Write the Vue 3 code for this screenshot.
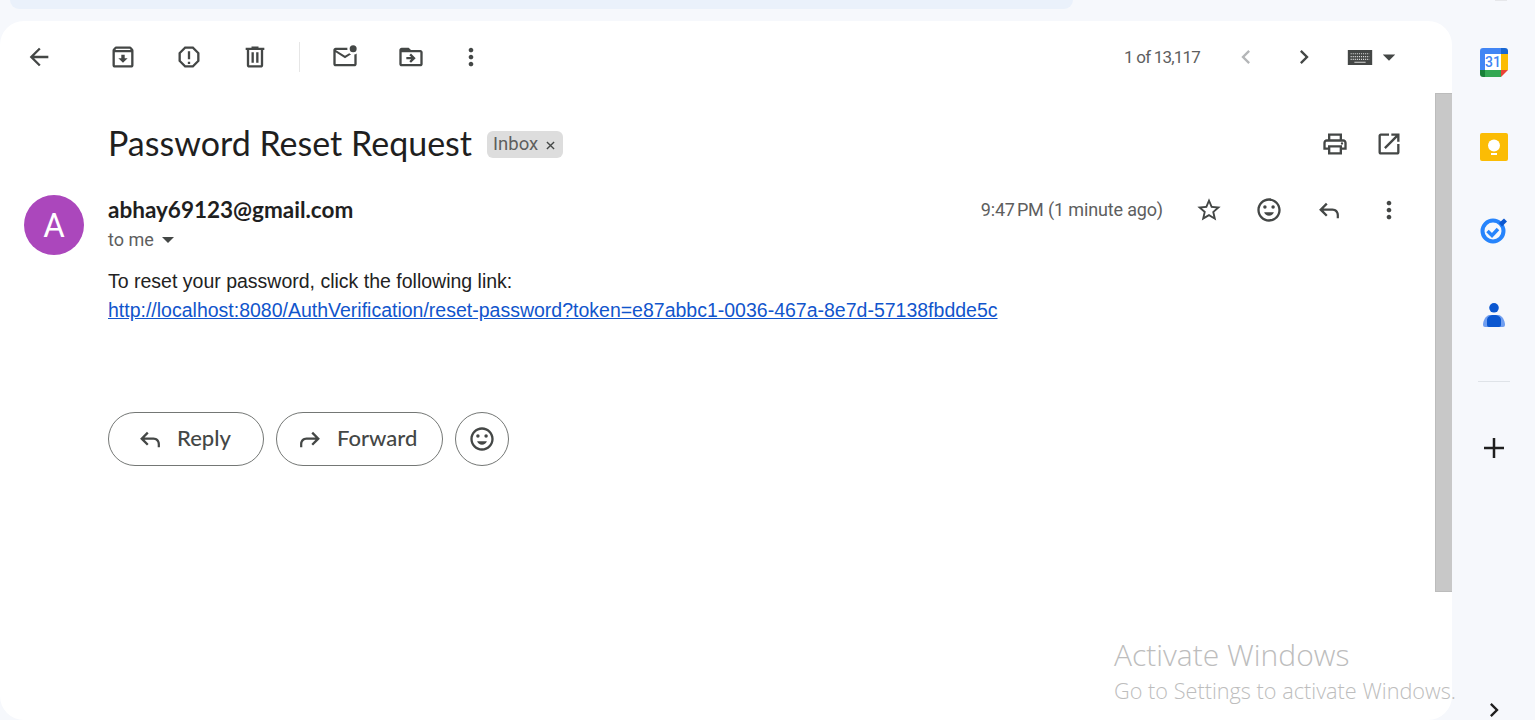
<script setup>
const icons = {
  back: 'M20 11H7.83l5.59-5.59L12 4l-8 8 8 8 1.41-1.41L7.83 13H20v-2z',
  archive: 'M20.54 5.23l-1.39-1.68C18.88 3.21 18.47 3 18 3H6c-.47 0-.88.21-1.16.55L3.46 5.23C3.17 5.57 3 6.02 3 6.5V19c0 1.1.9 2 2 2h14c1.1 0 2-.9 2-2V6.5c0-.48-.17-.93-.46-1.27zM6.24 5h11.52l.83 1H5.42l.82-1zM5 19V8h14v11H5zm8.45-9h-2.9v3H8l4 4 4-4h-2.55z',
  report: 'M15.73 3H8.27L3 8.27v7.46L8.27 21h7.46L21 15.73V8.27L15.73 3zM19 14.9L14.9 19H9.1L5 14.9V9.1L9.1 5h5.8L19 9.1v5.8zM11 7h2v7h-2zM11 16h2v2h-2z',
  trash: 'M15 4V3H9v1H4v2h1v13c0 1.1.9 2 2 2h10c1.1 0 2-.9 2-2V6h1V4h-5zm2 15H7V6h10v13zM9 8h2v9H9zm4 0h2v9h-2z',
  unread: 'M22 8.98V18c0 1.1-.9 2-2 2H4c-1.1 0-2-.9-2-2V6c0-1.1.9-2 2-2h10.1c-.06.32-.1.66-.1 1s.04.68.1 1H4l8 5 3.67-2.29c.47.43 1.02.76 1.63.98L12 13 4 8v10h16V9.9c.74-.15 1.42-.48 2-.92zM16 5a3 3 0 1 0 6 0 3 3 0 1 0-6 0z',
  folder: 'M20 6h-8l-2-2H4c-1.1 0-2 .9-2 2v12c0 1.1.9 2 2 2h16c1.1 0 2-.9 2-2V8c0-1.1-.9-2-2-2zm0 12H4V8h16v10zM12.16 12H8v2h4.16l-1.59 1.59L11.99 17 16 13l-4.01-4-1.42 1.41z',
  more: 'M12 8c1.1 0 2-.9 2-2s-.9-2-2-2-2 .9-2 2 .9 2 2 2zm0 2c-1.1 0-2 .9-2 2s.9 2 2 2 2-.9 2-2-.9-2-2-2zm0 6c-1.1 0-2 .9-2 2s.9 2 2 2 2-.9 2-2-.9-2-2-2z',
  prev: 'M15.41 7.41L14 6l-6 6 6 6 1.41-1.41L10.83 12z',
  next: 'M8.59 16.59L10 18l6-6-6-6-1.41 1.41L13.17 12z',
  drop: 'M7 10l5 5 5-5z',
  print: 'M19 8h-1V3H6v5H5c-1.66 0-3 1.34-3 3v6h4v4h12v-4h4v-6c0-1.66-1.34-3-3-3zM8 5h8v3H8V5zm8 12v2H8v-4h8v2zm2-2v-2H6v2H4v-4c0-.55.45-1 1-1h14c.55 0 1 .45 1 1v4h-2zM17 11.5a1 1 0 1 0 2 0 1 1 0 1 0-2 0z',
  open: 'M19 19H5V5h7V3H5c-1.11 0-2 .9-2 2v14c0 1.1.89 2 2 2h14c1.1 0 2-.9 2-2v-7h-2v7zM14 3v2h3.59l-9.83 9.83 1.41 1.41L19 6.41V10h2V3h-7z',
  star: 'M22 9.24l-7.19-.62L12 2 9.19 8.63 2 9.24l5.46 4.73L5.82 21 12 17.27 18.18 21l-1.63-7.03L22 9.24zM12 15.4l-3.76 2.27 1-4.28-3.32-2.88 4.38-.38L12 6.1l1.71 4.04 4.38.38-3.32 2.88 1 4.28L12 15.4z',
  smile: 'M12 2C6.48 2 2 6.48 2 12s4.48 10 10 10 10-4.48 10-10S17.52 2 12 2zm0 18c-4.41 0-8-3.59-8-8s3.59-8 8-8 8 3.59 8 8-3.59 8-8 8zM7 9.5a1.5 1.5 0 1 0 3 0 1.5 1.5 0 1 0-3 0zM14 9.5a1.5 1.5 0 1 0 3 0 1.5 1.5 0 1 0-3 0zM12 17c1.9 0 3.5-1.2 4.2-3H7.8c.7 1.8 2.3 3 4.2 3z',
  reply: 'M9.4 5.800L10.800 7.200 7.300 10.800H15c3.100 0 5.500 2.400 5.500 5.500V19h-1.900v-2.700c0-2-1.600-3.600-3.600-3.600H7.300l3.500 3.500-1.400 1.400L3.500 11.800z',
  forward: 'M14.600 5.800L13.200 7.200l3.500 3.600H9c-3.100 0-5.500 2.400-5.500 5.500V19h1.900v-2.700c0-2 1.600-3.600 3.600-3.600h7.700l-3.500 3.500 1.400 1.400 5.900-5.800z',
  plus: 'M20 13h-7v7h-2v-7H4v-2h7V4h2v7h7v2z',
}

const mainActions = [icons.archive, icons.report, icons.trash]
const moveActions = [icons.unread, icons.folder]
const messageActions = [icons.star, icons.smile, icons.reply, icons.more]
</script>

<template>
  <div class="page">
    <div class="top-strip">
      <div class="search-bar"></div>
      <div class="account-edge"></div>
    </div>

    <div class="main">
      <section class="panel">
        <div class="toolbar">
          <button class="tool back"><svg class="icon" viewBox="0 0 24 24"><path :d="icons.back" /></svg></button>
          <button v-for="d in mainActions" :key="d" class="tool"><svg class="icon" viewBox="0 0 24 24"><path :d="d" /></svg></button>
          <div class="divider"></div>
          <button v-for="d in moveActions" :key="d" class="tool"><svg class="icon" viewBox="0 0 24 24"><path :d="d" /></svg></button>
          <button class="tool narrow"><svg class="icon" viewBox="0 0 24 24"><path :d="icons.more" /></svg></button>

          <div class="pager">
            <span class="count">1 of 13,117</span>
            <svg class="icon chev off" viewBox="0 0 24 24"><path :d="icons.prev" /></svg>
            <svg class="icon chev on" viewBox="0 0 24 24"><path :d="icons.next" /></svg>
            <svg class="keyboard" viewBox="0 0 26 16">
              <rect width="26" height="16" fill="#444746" />
              <path d="M3 4h20M3 7h20M3 10h20" stroke="#d8d8d8" stroke-width="1.2" stroke-dasharray="1.2 1" />
              <path d="M7 13h12" stroke="#d8d8d8" stroke-width="1.2" />
            </svg>
            <svg class="icon drop" viewBox="0 0 24 24"><path :d="icons.drop" /></svg>
          </div>
        </div>

        <div class="body-row">
          <div class="mail">
            <div class="subject-row">
              <h1 class="subject">Password Reset Request</h1>
              <span class="chip">Inbox
                <svg class="chip-x" viewBox="0 0 10 10"><path d="M1 1l8 8M9 1l-8 8" /></svg>
              </span>
              <div class="subject-actions">
                <button class="tool small"><svg class="icon" viewBox="0 0 24 24"><path :d="icons.print" /></svg></button>
                <button class="tool small"><svg class="icon" viewBox="0 0 24 24"><path :d="icons.open" /></svg></button>
              </div>
            </div>

            <div class="sender-row">
              <div class="avatar">A</div>
              <div class="sender">
                <div class="sender-name">abhay69123@gmail.com</div>
                <div class="to-me">to me <svg class="to-drop" viewBox="0 0 10 5"><path d="M0 0l5 5 5-5z" /></svg></div>
              </div>
              <span class="date">9:47&#8239;PM (1 minute ago)</span>
              <div class="message-actions">
                <button v-for="d in messageActions" :key="d" class="tool act"><svg class="icon" viewBox="0 0 24 24"><path :d="d" /></svg></button>
              </div>
            </div>

            <div class="message">
              <div>To reset your password, click the following link:</div>
              <a href="#">http://localhost:8080/AuthVerification/reset-password?token=e87abbc1-0036-467a-8e7d-57138fbdde5c</a>
            </div>

            <div class="reply-row">
              <button class="pill reply"><svg class="icon" viewBox="0 0 24 24"><path :d="icons.reply" /></svg><span class="pill-label">Reply</span></button>
              <button class="pill forward"><svg class="icon" viewBox="0 0 24 24"><path :d="icons.forward" /></svg><span class="pill-label">Forward</span></button>
              <button class="pill round"><svg class="icon" viewBox="0 0 24 24"><path :d="icons.smile" /></svg></button>
            </div>
          </div>

          <div class="scroll-track"><div class="scroll-thumb"></div></div>
        </div>
      </section>

      <aside class="sidebar">
        <div class="side-item">
          <svg width="28" height="29" viewBox="0 0 28 29">
            <path d="M3 0h18v6H5v16H0V3a3 3 0 0 1 3-3z" fill="#4285f4" />
            <path d="M21 0h4a3 3 0 0 1 3 3v3h-7z" fill="#1967d2" />
            <rect x="21" y="6" width="7" height="16" fill="#fbbc04" />
            <rect x="5" y="22" width="16" height="7" fill="#34a853" />
            <path d="M0 22h5v7H3a3 3 0 0 1-3-3z" fill="#188038" />
            <path d="M21 22h7l-7 7z" fill="#ea4335" />
            <rect x="5" y="6" width="16" height="16" fill="#fff" />
            <text x="13" y="19" class="cal-text">31</text>
          </svg>
        </div>
        <div class="side-item keep">
          <svg width="28" height="28" viewBox="0 0 28 28">
            <rect width="28" height="28" rx="2" fill="#fbbc04" />
            <circle cx="14" cy="12.500" r="6" fill="#fff" />
            <rect x="11" y="20" width="6" height="2" fill="#fff" />
          </svg>
        </div>
        <div class="side-item tasks">
          <svg width="28" height="28" viewBox="0 0 28 28">
            <circle cx="13" cy="14" r="10.500" fill="none" stroke="#2684fc" stroke-width="4" />
            <path d="M7.500 14l4.500 4.500 6-6.500" fill="none" stroke="#2684fc" stroke-width="3.500" />
            <path d="M19 6l5-4.500 3 3-5 5z" fill="#0b57d0" />
          </svg>
        </div>
        <div class="side-item contact">
          <svg width="24" height="24" viewBox="0 0 24 24">
            <circle cx="12" cy="4.800" r="4.800" fill="#0b57d0" />
            <path d="M5 24H3a2 2 0 0 1-2-2c0-5 3-9 6-10h10c3 1 6 5 6 10a2 2 0 0 1-2 2z" fill="#6f9ef0" />
            <path d="M7 24a2 2 0 0 1-2-2v-5c0-3 3-5 7-5s7 2 7 5v5a2 2 0 0 1-2 2z" fill="#0b57d0" />
          </svg>
        </div>
        <div class="side-line"></div>
        <svg class="side-plus" viewBox="0 0 24 24"><path :d="icons.plus" /></svg>
        <svg class="side-next" viewBox="0 0 24 24"><path :d="icons.next" /></svg>
      </aside>
    </div>

    <div class="watermark">
      <div class="wm-title">Activate Windows</div>
      <div class="wm-sub">Go to Settings to activate Windows.</div>
    </div>
  </div>
</template>

<style>
html, body {
  margin: 0;
  background: #f6f8fc;
  overflow: hidden;
}
</style>

<style scoped>
.page {
  position: relative;
  width: 1535px;
  height: 720px;
  overflow: hidden;
  display: flex;
  flex-direction: column;
  background: #f6f8fc;
  font-family: Roboto, "Liberation Sans", sans-serif;
}
.top-strip {
  height: 21px;
  flex: none;
  padding-left: 10px;
  display: flex;
  justify-content: space-between;
  align-items: flex-start;
}
.search-bar {
  width: 1063px;
  height: 9px;
  background: #eaf1fb;
  border-radius: 0 0 24px 24px;
}
.account-edge {
  width: 12px;
  height: 1px;
  margin-right: 28px;
  background: #e6e7ea;
}
.main {
  flex: 1;
  display: flex;
  min-height: 0;
}
.panel {
  flex: 1;
  display: flex;
  flex-direction: column;
  background: #fff;
  border-radius: 24px;
  overflow: hidden;
}
button {
  border: none;
  background: none;
  padding: 0;
  font: inherit;
}
.icon {
  width: 28px;
  height: 28px;
  display: block;
  fill: #444746;
}
.toolbar {
  height: 72px;
  flex: none;
  display: flex;
  align-items: center;
  padding-left: 6px;
}
.tool {
  width: 66px;
  height: 54px;
  display: flex;
  align-items: center;
  justify-content: center;
  flex: none;
}
.back {
  margin-right: 18px;
}
.narrow {
  width: 54px;
}
.divider {
  width: 1px;
  height: 30px;
  background: #e6e6e6;
  margin: 0 12px 0 11px;
}
.pager {
  margin-left: auto;
  display: flex;
  align-items: center;
  margin-right: 48px;
}
.count {
  font-size: 17px;
  letter-spacing: -0.8px;
  color: #5e5e5e;
  margin-right: 32px;
}
.chev {
  margin-right: 30px;
}
.chev.on {
  margin-right: 32px;
}
.chev.off {
  fill: #b4b6b8;
}
.keyboard {
  width: 26px;
  height: 15px;
  margin-left: -3px;
}
.drop {
  margin-left: 1px;
  width: 30px;
  height: 30px;
}
.body-row {
  flex: 1;
  display: flex;
  min-height: 0;
}
.mail {
  flex: 1;
  padding-left: 24px;
}
.subject-row {
  height: 102px;
  display: flex;
  align-items: center;
  padding-left: 84px;
}
.subject {
  margin: 0 0 4px;
  font-family: Lato, sans-serif;
  font-size: 34px;
  font-weight: 400;
  color: #1f1f1f;
}
.chip {
  margin-left: 15px;
  height: 27px;
  width: 76px;
  box-sizing: border-box;
  padding-left: 6px;
  display: flex;
  align-items: center;
  gap: 8px;
  background: #dddddd;
  border-radius: 6px;
  font-size: 18.500px;
  color: #5e5e5e;
}
.chip-x {
  width: 9px;
  height: 9px;
  margin-top: 2px;
  fill: none;
  stroke: #444746;
  stroke-width: 1.5;
}
.subject-actions {
  margin-left: auto;
  margin-right: 19px;
  display: flex;
}
.small {
  width: 54px;
}
.sender-row {
  display: flex;
  align-items: flex-start;
}
.avatar {
  width: 60px;
  height: 60px;
  flex: none;
  border-radius: 50%;
  background: #ab47bc;
  color: #fff;
  font-size: 33px;
  display: flex;
  align-items: center;
  justify-content: center;
  margin-right: 24px;
}
.sender {
  flex: 1;
}
.sender-name {
  height: 30px;
  line-height: 29px;
  font-family: Lato, sans-serif;
  font-size: 22.500px;
  font-weight: 700;
  color: #1f1f1f;
}
.to-me {
  height: 30px;
  line-height: 30px;
  font-size: 18px;
  color: #5e5e5e;
  display: flex;
  align-items: center;
  gap: 8px;
}
.to-drop {
  width: 12px;
  height: 6px;
  fill: #444746;
}
.date {
  line-height: 30px;
  font-size: 18px;
  letter-spacing: -0.150px;
  color: #5e5e5e;
  margin-right: 16px;
}
.message-actions {
  display: flex;
  margin-right: 16px;
  margin-top: -12px;
}
.act {
  width: 60px;
}
.message {
  margin-top: 12px;
  padding-left: 84px;
  font-family: "Liberation Sans", sans-serif;
  font-size: 19.5px;
  line-height: 29px;
  color: #222;
}
.message a {
  color: #1155cc;
}
.reply-row {
  margin-top: 87px;
  padding-left: 84px;
  display: flex;
  gap: 12px;
}
.pill {
  height: 54px;
  box-sizing: border-box;
  border: 1px solid #747775;
  border-radius: 27px;
  display: flex;
  align-items: center;
  font-family: Lato, sans-serif;
  font-size: 22px;
  font-weight: 500;
  color: #444746;
}
.pill-label {
  margin-bottom: 4px;
}
.pill.reply {
  width: 156px;
  padding-left: 27px;
  gap: 13px;
}
.pill.forward {
  width: 167px;
  padding-left: 19px;
  gap: 13px;
}
.pill.round {
  width: 54px;
  justify-content: center;
}
.scroll-track {
  width: 17px;
  flex: none;
}
.scroll-thumb {
  height: 499px;
  background: #c8c8c8;
  border: 1px solid #bcbcbc;
  border-right: none;
  box-sizing: border-box;
}
.sidebar {
  width: 83px;
  flex: none;
  margin-top: -1px;
  display: flex;
  flex-direction: column;
  align-items: center;
  padding-left: 1px;
  box-sizing: border-box;
}
.side-item {
  height: 85px;
  flex: none;
  display: flex;
  align-items: center;
  justify-content: center;
  box-sizing: border-box;
}
.side-item.keep {
  padding-bottom: 1px;
}
.side-item.tasks {
  padding-bottom: 3px;
}
.side-item.contact {
  padding-bottom: 5px;
}
.cal-text {
  font-family: Roboto, sans-serif;
  font-size: 14px;
  font-weight: 500;
  text-anchor: middle;
  fill: #4285f4;
}
.side-line {
  width: 32px;
  height: 1px;
  background: #dfe3e8;
  margin-top: 21px;
}
.side-plus {
  width: 30px;
  height: 30px;
  fill: #1f1f1f;
  margin-top: 51px;
}
.side-next {
  width: 28px;
  height: 28px;
  fill: #1f1f1f;
  margin-top: auto;
  margin-bottom: -4px;
}
.watermark {
  position: absolute;
  left: 1114px;
  top: 636px;
  color: #bdbdbd;
  font-family: "Open Sans", sans-serif;
  font-weight: 300;
  white-space: nowrap;
  pointer-events: none;
}
.wm-title {
  font-size: 30px;
  line-height: 38px;
}
.wm-sub {
  font-size: 21.7px;
  line-height: 34px;
}
</style>
